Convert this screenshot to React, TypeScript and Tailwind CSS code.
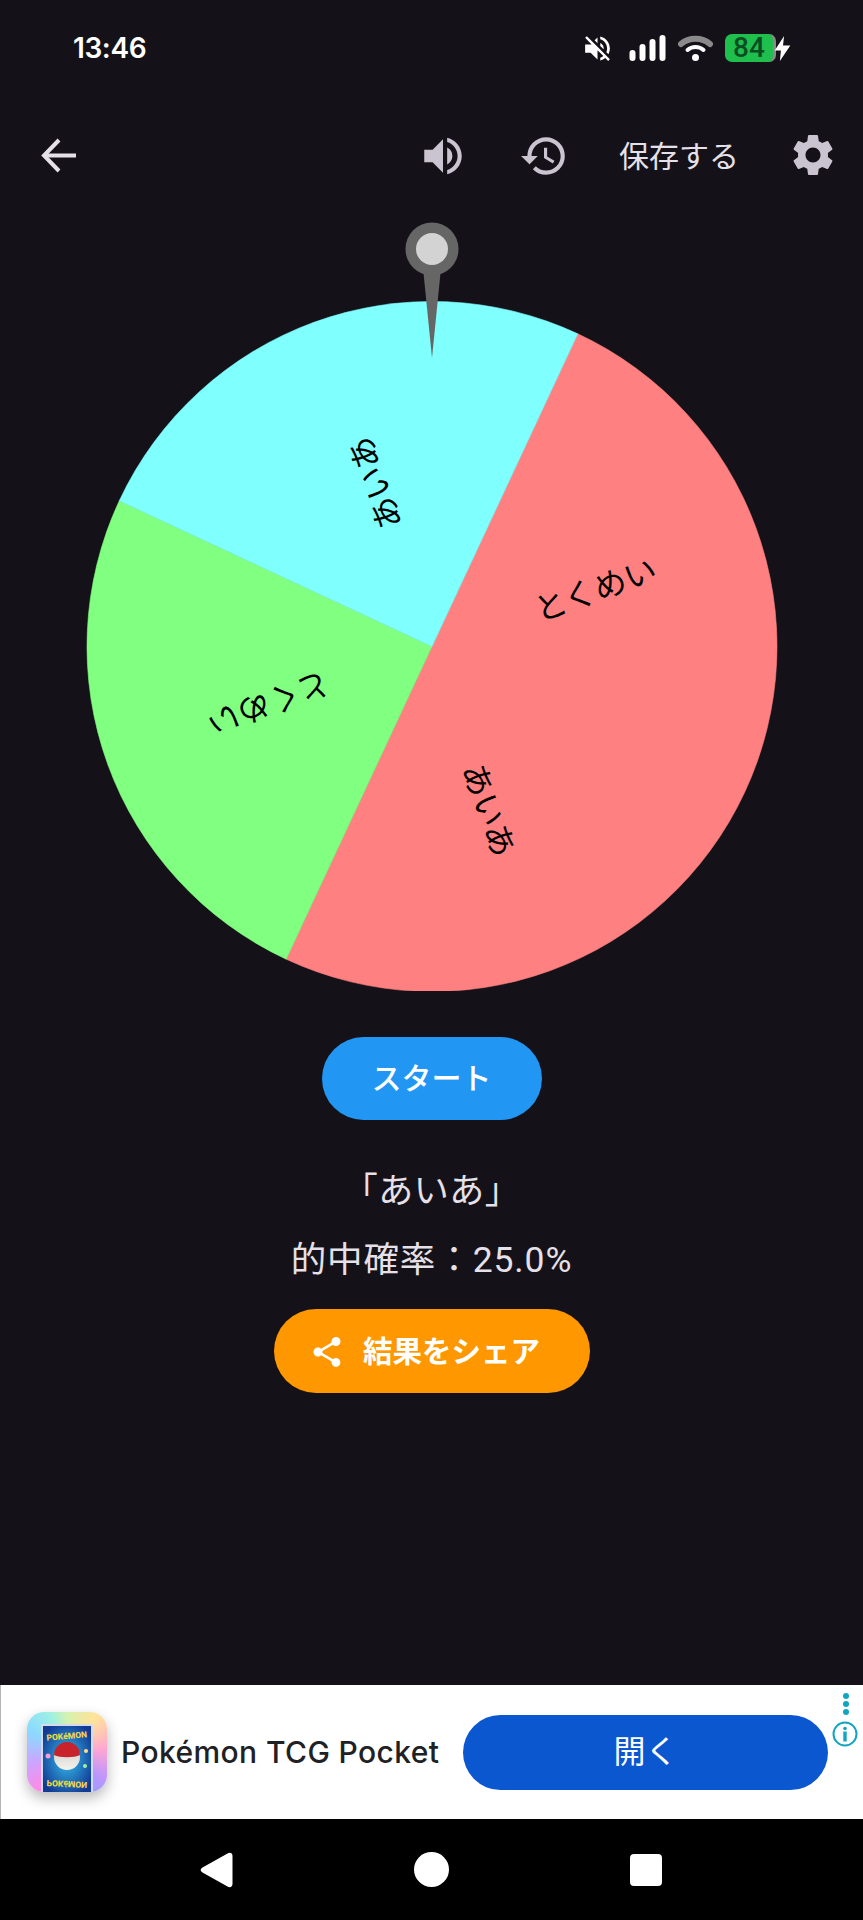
import { MdHistory, MdSettings, MdShare, MdVolumeOff, MdVolumeUp } from 'react-icons/md';

const FONT = 'font-[Roboto,"Noto_Sans_CJK_JP",sans-serif]';

const CX = 432;
const CY = 424.5;
const R = 345;

// angles are clockwise from the top of the wheel; the two red slices are one colour, so one path
const colors = [
  { from: 25, to: 205, color: '#ff8080' },
  { from: 205, to: 295, color: '#80ff80' },
  { from: 295, to: 385, color: '#80ffff' },
];

const labels = [
  { mid: 70, label: 'とくめい' },
  { mid: 160, label: 'あいあ' },
  { mid: 250, label: 'とくめい' },
  { mid: 340, label: 'あいあ' },
];

const point = (deg: number, r: number) => {
  const a = (deg * Math.PI) / 180;
  return [CX + r * Math.sin(a), CY - r * Math.cos(a)];
};

function Wheel() {
  return (
    <svg viewBox="0 0 863 769" className="block w-[863px] h-[769px] mt-2">
      {colors.map((s) => {
        const [x1, y1] = point(s.from, R);
        const [x2, y2] = point(s.to, R);
        return <path key={s.from} d={`M${CX} ${CY}L${x1} ${y1}A${R} ${R} 0 0 1 ${x2} ${y2}Z`} fill={s.color} stroke={s.color} strokeWidth="0.6" />;
      })}
      {labels.map((s) => {
        const [x, y] = point(s.mid, 173);
        return (
          <text key={s.mid} x={x} y={y} transform={`rotate(${s.mid - 90} ${x} ${y})`} textAnchor="middle" dominantBaseline="central"
            fill="#000" fontSize="32" fontFamily='"Noto Sans CJK JP", sans-serif'>
            {s.label}
          </text>
        );
      })}
      {/* pin */}
      <path d="M423 46L441 46L432 136Z" fill="#666" />
      <circle cx="432" cy="27" r="26.5" fill="#666" />
      <circle cx="432" cy="27" r="16" fill="#d3d3d3" />
    </svg>
  );
}

function StatusBar() {
  return (
    <div className="flex items-center h-[96px] pl-[73px] pr-[72px] text-white">
      <span className="text-[28px] font-semibold font-[Inter,sans-serif] tracking-[-0.4px]">13:46</span>
      <div className="flex items-center ml-auto">
        <MdVolumeOff size={33} className="text-white mr-[15px] ml-[1px]" />
        <svg width="37" height="26" viewBox="0 0 37 26" fill="#fff" className="mr-[12px]">
          <rect x="0.5" y="15" width="6" height="11" rx="3" />
          <rect x="10.5" y="9" width="6" height="17" rx="3" />
          <rect x="20.5" y="4" width="6" height="22" rx="3" />
          <rect x="30.5" y="0" width="6" height="26" rx="3" />
        </svg>
        <svg width="35" height="26" viewBox="0 0 35 26" fill="none" strokeLinecap="round" className="mr-[12px]">
          <path d="M3 9C11 2 24 2 32 9" stroke="#8a8a8a" strokeWidth="6" />
          <path d="M9.5 15C14 11 21 11 25.5 15" stroke="#fff" strokeWidth="4" />
          <circle cx="17.5" cy="22.5" r="3.5" fill="#fff" />
        </svg>
        <div className="flex items-center justify-center w-[51px] h-[28px] rounded-[7px] bg-[#1fbf4d] border-r-[3px] border-[#8a8a8a] text-[#0b4d22] text-[28px] font-medium leading-none font-[Roboto,sans-serif]">
          84
        </div>
        <svg width="17" height="25" viewBox="0 0 15 24" fill="#fff" className="-ml-[2px]">
          <path d="M9 0L0 14H6L5 24L15 9H8Z" />
        </svg>
      </div>
    </div>
  );
}

function AppBar() {
  return (
    <div className="flex items-center h-[118px] text-[#cac4d0]">
      <svg width="36" height="35" viewBox="0 0 36 35" fill="none" stroke="#e6e0e9" strokeWidth="4" className="ml-[41px]">
        <path d="M35 17.5H3" />
        <path d="M18 2L3 17.5L18 33" />
      </svg>
      <MdVolumeUp size={50} className="ml-auto mt-[2px]" />
      <MdHistory size={50} className="ml-[51px] mt-[2px]" />
      <span className="ml-[50px] mt-[4px] text-[30px] leading-none text-[#e6e0e9]">保存する</span>
      <MdSettings size={50} className="ml-[49px] mr-[25px]" />
    </div>
  );
}

function PokemonIcon() {
  return (
    <div className="flex justify-center items-end w-[80px] h-[80px] shrink-0 rounded-[17px] overflow-hidden shadow-[0_6px_14px_rgba(0,0,0,0.28)] bg-[conic-gradient(from_0deg,#d5f2b0,#ffe39a_40deg,#ffa6d2_85deg,#b995ff_130deg,#7fa6ff_165deg,#ff8ae4_215deg,#cfa3ff_250deg,#8cd9ff_300deg,#9cf0e4_335deg,#d5f2b0)]">
      <svg width="52" height="68" viewBox="0 0 52 68">
        <defs>
          <radialGradient id="card" cx="50%" cy="50%" r="60%">
            <stop offset="0%" stopColor="#35c0ee" />
            <stop offset="100%" stopColor="#123a94" />
          </radialGradient>
          <linearGradient id="ball" x1="0" y1="0" x2="0" y2="1">
            <stop offset="0%" stopColor="#c9c9c9" />
            <stop offset="100%" stopColor="#f5f2ea" />
          </linearGradient>
        </defs>
        <rect x="0" y="0" width="52" height="68" fill="#d5dbe8" />
        <rect x="2" y="2" width="48" height="66" fill="url(#card)" />
        <text x="26" y="15" textAnchor="middle" fontSize="8.5" fontWeight="800" fill="#f6d743" fontFamily="Roboto, sans-serif" transform="rotate(-5 26 15)">POKéMON</text>
        <text x="26" y="-57" textAnchor="middle" fontSize="8.5" fontWeight="800" fill="#f6d743" fontFamily="Roboto, sans-serif" transform="scale(1 -1) rotate(-3 26 -57)">POKéMON</text>
        <circle cx="26" cy="33" r="13" fill="url(#ball)" />
        <path d="M13 31A13 13 0 0 1 39 31C33 34 19 34 13 31Z" fill="#c8222c" />
        <circle cx="7" cy="32" r="2.5" fill="#ff9ad5" />
        <circle cx="45" cy="27" r="2" fill="#ffe08a" />
        <circle cx="44" cy="42" r="2" fill="#a4f0a0" />
      </svg>
    </div>
  );
}

function Ad() {
  return (
    <div className="relative flex items-center h-[134px] bg-white border-l border-[#b5b5b5]">
      <div className="ml-[26px]">
        <PokemonIcon />
      </div>
      <span className="ml-[14px] text-[30px] font-[Inter,sans-serif] font-medium tracking-[0.4px] text-[#202124] whitespace-nowrap">Pokémon TCG Pocket</span>
      <div className="flex items-center justify-center ml-auto mr-[35px] w-[365px] h-[75px] rounded-full bg-[#0b57d0] text-white text-[32px]">開く</div>
      <div className="absolute right-[14px] top-[8px] flex flex-col items-center gap-[2px]">
        <span className="w-[6px] h-[6px] rounded-full bg-[#12a5c2]" />
        <span className="w-[6px] h-[6px] rounded-full bg-[#12a5c2]" />
        <span className="w-[6px] h-[6px] rounded-full bg-[#12a5c2]" />
      </div>
      <svg width="26" height="26" viewBox="0 0 26 26" fill="none" className="absolute right-[5px] top-[36px]">
        <circle cx="13" cy="13" r="11.5" stroke="#12a5c2" strokeWidth="2" />
        <circle cx="13" cy="7.5" r="1.8" fill="#12a5c2" />
        <rect x="11.3" y="10.5" width="3.4" height="10" fill="#12a5c2" />
      </svg>
    </div>
  );
}

function NavBar() {
  return (
    <div className="flex items-center h-[101px] bg-black">
      <svg width="33" height="36" viewBox="0 0 32 36" fill="#fff" className="ml-[200px]">
        <path d="M27 1.5C29.5 0 32 1 32 4V32C32 35 29.5 36 27 34.5L2 20.5C-0.5 19 -0.5 17 2 15.5Z" />
      </svg>
      <div className="ml-[181px] w-[35px] h-[35px] rounded-full bg-white" />
      <div className="ml-[181px] w-[32px] h-[32px] rounded-[4px] bg-white" />
    </div>
  );
}

export default function App() {
  return (
    <div className={`flex flex-col w-[863px] h-[1920px] overflow-hidden bg-[#141218] ${FONT}`}>
      <StatusBar />
      <AppBar />
      <Wheel />

      <div className="flex flex-col items-center">
        <button className="mt-[46px] w-[220px] h-[83px] rounded-full bg-[#2196f3] text-white text-[30px] font-medium">スタート</button>
        <p className="mt-[50px] text-[35px] leading-[44px] tracking-[0.5px] text-[#e6e0e9]">「あいあ」</p>
        <p className="mt-[24px] text-[35.5px] leading-[44px] tracking-[0.9px] text-[#e6e0e9]">的中確率：25.0%</p>
        <button className="mt-[27px] flex items-center justify-center gap-[18px] w-[316px] h-[84px] pr-[14px] pt-[2px] rounded-full bg-[#ff9800] text-white text-[29.5px] font-bold">
          <MdShare size={36} />
          結果をシェア
        </button>
      </div>

      <div className="flex-1" />
      <Ad />
      <NavBar />
    </div>
  );
}
